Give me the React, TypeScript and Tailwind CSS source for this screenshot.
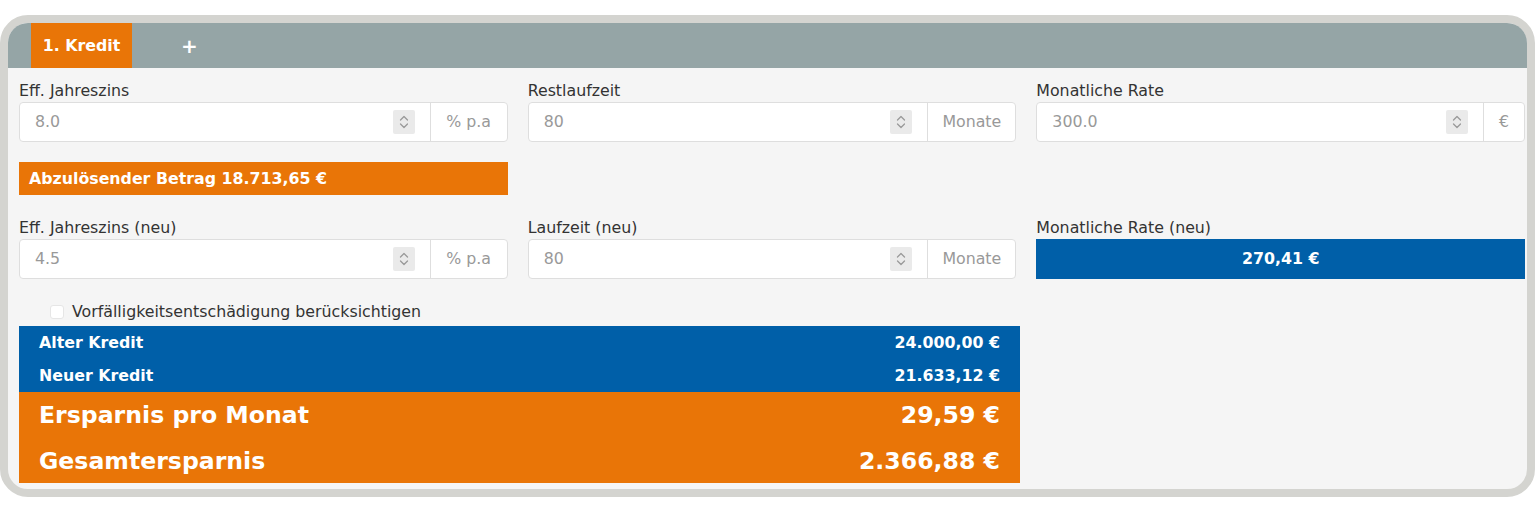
import React from "react";

const FONT = { fontFamily: '"DejaVu Sans", Verdana, sans-serif' };

function Spinner() {
  return (
    <div className="w-[22px] h-[24px] bg-[#eaeaea] rounded-[2px] flex flex-col items-center justify-center shrink-0">
      <svg width="12" height="18" viewBox="0 0 12 18" fill="none" stroke="#9a9a9a" strokeWidth="1.3" strokeLinecap="round" strokeLinejoin="round">
        <path d="M2.5 7 L6 3.5 L9.5 7" />
        <path d="M2.5 11 L6 14.5 L9.5 11" />
      </svg>
    </div>
  );
}

function Field({ label, value, unit, unitW }: { label: string; value: string; unit: string; unitW: string }) {
  return (
    <div className="flex flex-col">
      <div className="text-[15.8px] leading-[20px] text-[#333] mb-px" style={FONT}>{label}</div>
      <div className="h-[40px] flex bg-white border border-[#dedede] rounded-[4px]">
        <div className="flex-1 flex items-center pl-[15px] pr-[15px]">
          <span className="flex-1 text-[15.8px] text-[#999]" style={FONT}>{value}</span>
          <Spinner />
        </div>
        <div className={`flex items-center justify-center border-l border-[#dedede] text-[15.8px] text-[#999] ${unitW}`} style={FONT}>{unit}</div>
      </div>
    </div>
  );
}

export default function App() {
  return (
    <div className="w-[1536px] h-[512px] bg-white pt-[15px]">
      <div className="w-[1535px] border-[8px] border-[#d4d4d0] rounded-[28px] overflow-hidden bg-[#f5f5f5]">
        <div className="h-[45px] bg-[#95a5a6] flex items-stretch pl-[23px]">
          <div className="w-[101px] bg-[#e97507] flex items-center justify-center text-white font-bold text-[15.8px]" style={FONT}>1. Kredit</div>
          <div className="ml-[49px] flex items-center text-white text-[20px] font-bold" style={FONT}>+</div>
        </div>
        <div className="pl-[11px] pr-[2px] pt-[13px] pb-[6px]">
          <div className="grid grid-cols-3 gap-x-[20px]">
            <Field label="Eff. Jahreszins" value="8.0" unit="% p.a" unitW="w-[77px]" />
            <Field label="Restlaufzeit" value="80" unit="Monate" unitW="w-[88px]" />
            <Field label="Monatliche Rate" value="300.0" unit="€" unitW="w-[41px]" />
          </div>
          <div className="grid grid-cols-3 gap-x-[20px] mt-[20px]">
            <div className="h-[33px] bg-[#e97507] flex items-center pl-[10px] text-white font-bold text-[15.8px]" style={FONT}>
              Abzulösender Betrag 18.713,65 €
            </div>
          </div>
          <div className="grid grid-cols-3 gap-x-[20px] mt-[23px]">
            <Field label="Eff. Jahreszins (neu)" value="4.5" unit="% p.a" unitW="w-[77px]" />
            <Field label="Laufzeit (neu)" value="80" unit="Monate" unitW="w-[88px]" />
            <div className="flex flex-col">
              <div className="text-[15.8px] leading-[20px] text-[#333] mb-px" style={FONT}>Monatliche Rate (neu)</div>
              <div className="h-[40px] bg-[#005fa8] flex items-center justify-center text-white font-bold text-[15.8px]" style={FONT}>270,41 €</div>
            </div>
          </div>
          <div className="h-[47px] pt-[18px] flex items-center">
            <div className="ml-[31px] w-[14px] h-[14px] bg-white border border-[#e6e6e6] rounded-[3px]" />
            <span className="ml-[8px] text-[15.8px] text-[#333]" style={FONT}>Vorfälligkeitsentschädigung berücksichtigen</span>
          </div>
          <div className="w-[1001px]">
            <div className="bg-[#005fa8] text-white font-bold text-[15.8px]" style={FONT}>
              <div className="h-[33px] flex items-center justify-between px-[20px]">
                <span>Alter Kredit</span>
                <span>24.000,00 €</span>
              </div>
              <div className="h-[33px] flex items-center justify-between px-[20px]">
                <span>Neuer Kredit</span>
                <span>21.633,12 €</span>
              </div>
            </div>
            <div className="bg-[#e97507] text-white font-bold text-[23.6px]" style={FONT}>
              <div className="h-[45px] pt-[2px] flex items-center justify-between px-[20px]">
                <span>Ersparnis pro Monat</span>
                <span>29,59 €</span>
              </div>
              <div className="h-[46px] pt-[3px] flex items-center justify-between px-[20px]">
                <span>Gesamtersparnis</span>
                <span>2.366,88 €</span>
              </div>
            </div>
          </div>
        </div>
      </div>
    </div>
  );
}
